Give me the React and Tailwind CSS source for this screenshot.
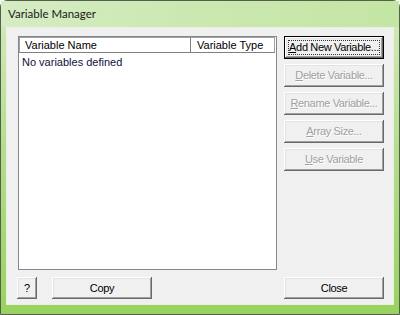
import React from 'react';

const btn =
  'flex items-center justify-center bg-[#f0f0f0] text-[11px] tracking-[-0.35px] shadow-[inset_-1px_-1px_0_#696969,inset_1px_1px_0_#ffffff,inset_-2px_-2px_0_#a0a0a0,inset_2px_2px_0_#e3e3e3]';

function SideButton({ children, disabled, isDefault }) {
  if (isDefault) {
    return (
      <div className="h-[23px] w-[100px] border border-black">
        <div className={`${btn} relative h-full w-full text-[#000]`}>
          <div className="absolute inset-[3px] border border-dotted border-[#333]" />
          <span>{children}</span>
        </div>
      </div>
    );
  }
  return (
    <div
      className={`${btn} h-[23px] w-[100px] ${
        disabled ? 'text-[#a0a0a0] [text-shadow:1px_1px_0_#ffffff]' : 'text-black'
      }`}
    >
      {children}
    </div>
  );
}

export default function App() {
  return (
    <div
      className="w-[400px] h-[315px] bg-white"
      style={{ fontFamily: '"Liberation Sans", Arial, sans-serif' }}
    >
      <div className="flex h-[315px] w-[400px] flex-col rounded-t-[7px] border border-[#55604c] bg-gradient-to-b from-[#d3ebbd] via-[#b3dc8c] to-[#98d25e]">
        {/* title bar */}
        <div className="flex h-[26px] shrink-0 items-center bg-gradient-to-r from-[#d6ecc4] via-[#cbe8b0] to-[#c4e6a4] pl-[7px] text-[11.5px] text-[#1a1a1a] [font-family:Lato,sans-serif]">
          Variable Manager
        </div>

        {/* client area */}
        <div className="flex-1 px-[5px] pb-[9px]">
          <div className="flex h-full flex-col border border-[#e8f2df] bg-[#f0f0f0] pl-[11px] pr-[9px] pt-[8px]">
            <div className="flex flex-1 gap-[7px]">
              {/* list */}
              <div className="flex h-[234px] w-[259px] flex-col border border-[#828790] bg-white">
                <div className="flex h-[16px] shrink-0 text-[11px] text-black">
                  <div className="flex w-[172px] items-center border border-[#a0a0a0] border-r-[#808080] border-b-[#808080] pl-[5px]">
                    Variable Name
                  </div>
                  <div className="flex w-[84px] items-center border border-l-0 border-[#a0a0a0] border-b-[#808080] pl-[6px]">
                    Variable Type
                  </div>
                </div>
                <div className="pl-[3px] pt-[1px] text-[11px] text-[#101040]">
                  No variables defined
                </div>
              </div>

              {/* side buttons */}
              <div className="flex flex-col gap-[5px]">
                <SideButton isDefault>
                  <span className="underline">A</span>dd New Variable...
                </SideButton>
                <SideButton disabled>
                  <span className="underline">D</span>elete Variable...
                </SideButton>
                <SideButton disabled>
                  <span className="underline">R</span>ename Variable...
                </SideButton>
                <SideButton disabled>
                  <span className="underline">A</span>rray Size...
                </SideButton>
                <SideButton disabled>
                  <span className="underline">U</span>se Variable
                </SideButton>
              </div>
            </div>

            {/* bottom row */}
            <div className="flex items-center pb-[5px]">
              <div className={`${btn} ml-[-1px] h-[22px] w-[20px] text-black`}>?</div>
              <div className={`${btn} ml-[15px] h-[22px] w-[100px] text-black`}>Copy</div>
              <div className={`${btn} ml-auto h-[22px] w-[100px] text-black`}>Close</div>
            </div>
          </div>
        </div>
      </div>
    </div>
  );
}
